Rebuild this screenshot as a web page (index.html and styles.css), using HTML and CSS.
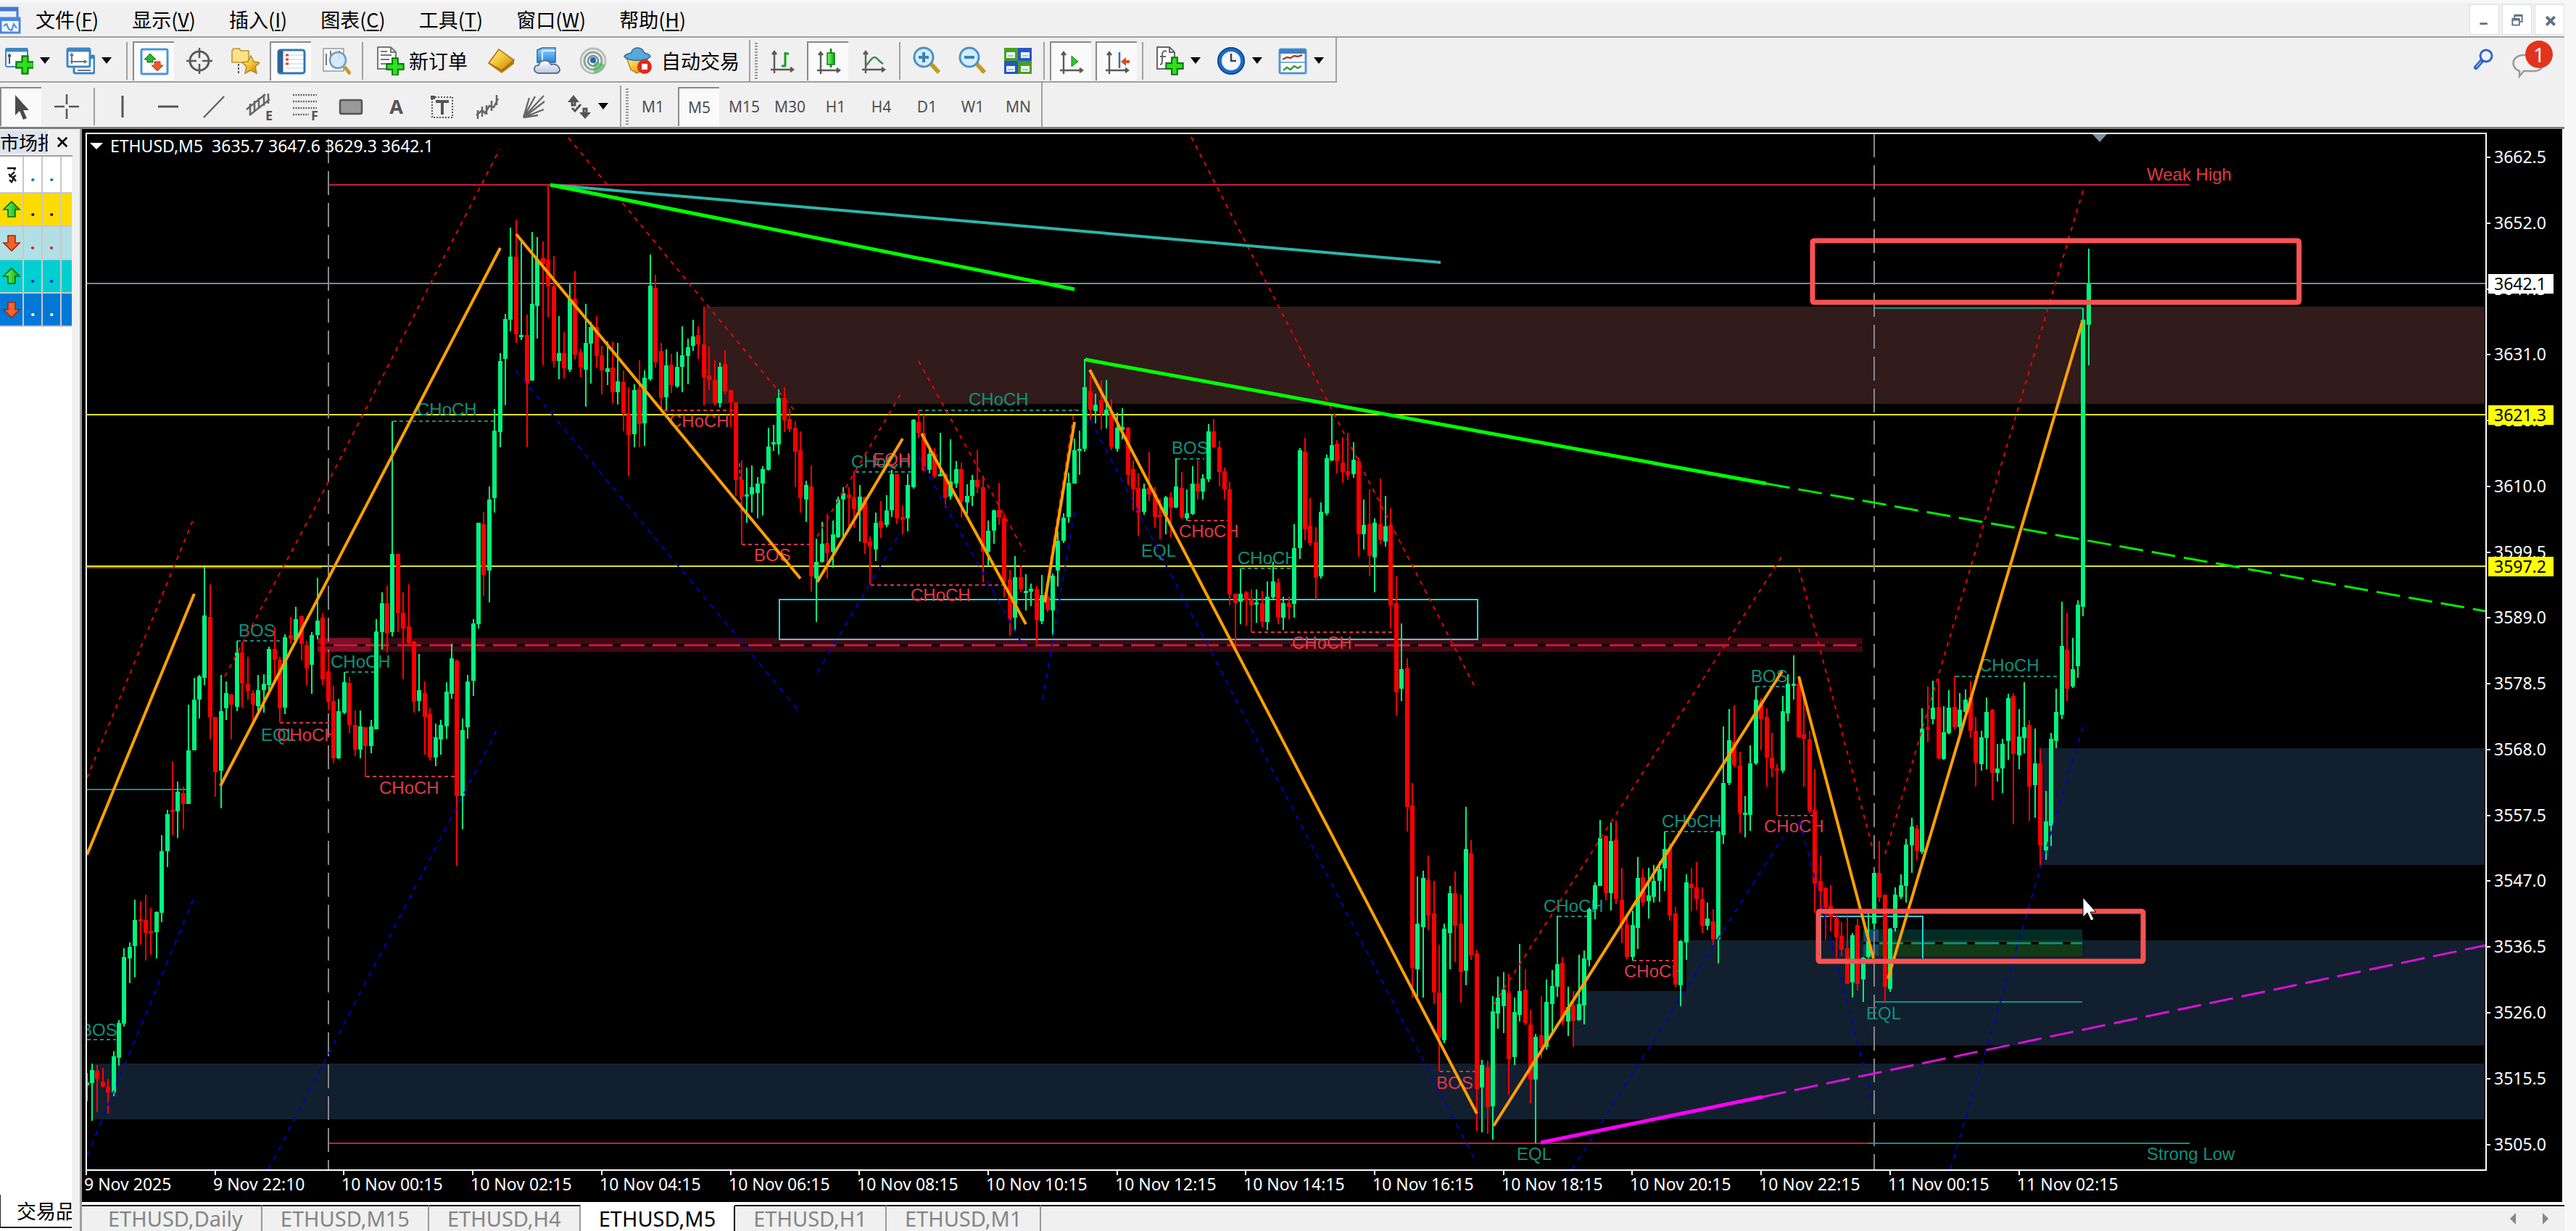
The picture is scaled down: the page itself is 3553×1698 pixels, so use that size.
FILE: index.html
```html
<!DOCTYPE html>
<html lang="zh-CN">
<head>
<meta charset="utf-8">
<meta name="viewport" content="width=device-width, initial-scale=1">
<title>ETHUSD,M5</title>
<link rel="stylesheet" href="styles.css">
</head>
<body>
<svg class="defs" aria-hidden="true">
  <defs>
    <linearGradient id="gold" x1="0" y1="0" x2="1" y2="1"><stop offset="0" stop-color="#fff0a0"/><stop offset=".5" stop-color="#f2c12e"/><stop offset="1" stop-color="#b87a10"/></linearGradient>
    <linearGradient id="sky" x1="0" y1="0" x2="0" y2="1"><stop offset="0" stop-color="#8fd3ff"/><stop offset="1" stop-color="#2a86d8"/></linearGradient>
    <linearGradient id="cloudfill" x1="0" y1="0" x2="0" y2="1"><stop offset="0" stop-color="#ffffff"/><stop offset="1" stop-color="#b9c8dd"/></linearGradient>
    <linearGradient id="leaf" x1="0" y1="0" x2="1" y2="0"><stop offset="0" stop-color="#7dff6a"/><stop offset="1" stop-color="#0aa50a"/></linearGradient>
    <symbol id="plus" viewBox="0 0 20 20"><path d="M7 1h6v6h6v6h-6v6H7v-6H1V7h6z" fill="#2fe01f" stroke="#087a0c" stroke-width="1.6"/></symbol>
    <symbol id="axes" viewBox="0 0 40 40"><path d="M9 7v30M4 32h31M6 11l3-4 3 4M31 29l4 3-4 3" fill="none" stroke="#5a5a5a" stroke-width="2.4"/></symbol>
    <symbol id="up" viewBox="0 0 26 26"><path d="M13 2l11 11h-6v10H8V13H2z" fill="url(#leaf)" stroke="#0a6a12" stroke-width="1.6"/></symbol>
    <symbol id="down" viewBox="0 0 26 26"><path d="M13 24L2 13h6V3h10v10h6z" fill="#f4622e" stroke="#9a2a0c" stroke-width="1.6"/></symbol>
  </defs>
</svg>

<header class="chrome">
  <nav class="menu">
    <svg class="app-icon" viewBox="0 0 30 40"><rect x="-8" y="4" width="32" height="22" fill="#e8f1fd" stroke="#3f78d6" stroke-width="3"/><path d="M-8 6h32" stroke="#3f78d6" stroke-width="5"/><rect x="1" y="18" width="26" height="20" fill="#f4f9ff" stroke="#4a86e0" stroke-width="3"/><path d="M1 20h26" stroke="#4a86e0" stroke-width="4"/><path d="M5 29l4-3 3 7 4 2 3-9 4 6" fill="none" stroke="#4a86e0" stroke-width="2"/></svg>
    <button class="menu-item">文件(<u>F</u>)</button>
    <button class="menu-item">显示(<u>V</u>)</button>
    <button class="menu-item">插入(<u>I</u>)</button>
    <button class="menu-item">图表(<u>C</u>)</button>
    <button class="menu-item">工具(<u>T</u>)</button>
    <button class="menu-item">窗口(<u>W</u>)</button>
    <button class="menu-item">帮助(<u>H</u>)</button>
    <div class="window-buttons">
      <button aria-label="最小化"><svg viewBox="0 0 41 41"><path d="M14 27h11" stroke="#5f7283" stroke-width="3"/></svg></button>
      <button aria-label="还原"><svg viewBox="0 0 41 41"><path d="M17 19v-4h11v9h-4M14 20h10v9H14z" fill="none" stroke="#5f7283" stroke-width="2"/><path d="M17 15h11M14 21h10" stroke="#5f7283" stroke-width="3"/></svg></button>
      <button aria-label="关闭"><svg viewBox="0 0 41 41"><path d="M16 17l12 12M28 17L16 29" stroke="#5f7283" stroke-width="4"/></svg></button>
    </div>
  </nav>

  <div class="bar-row">
    <div class="toolbar toolbar-main">
      <button class="tool wide" aria-label="新图表"><svg class="ico" viewBox="0 0 40 40"><rect x="2" y="3" width="30" height="25" rx="2" fill="#fff" stroke="#3d86c4" stroke-width="2"/><path d="M2 5h30" stroke="#3d86c4" stroke-width="5"/><path d="M7 24V12M5 14l2-3 2 3" fill="none" stroke="#456" stroke-width="2"/><use href="#plus" x="15" y="12" width="27" height="27"/></svg><span class="caret"></span></button>
      <button class="tool wide" aria-label="配置文件"><svg class="ico" viewBox="0 0 40 40"><rect x="11" y="13" width="28" height="24" rx="2" fill="#fff" stroke="#3d86c4" stroke-width="3"/><path d="M11 15h28" stroke="#3d86c4" stroke-width="4"/><rect x="2" y="3" width="31" height="25" rx="2" fill="#fff" stroke="#3d86c4" stroke-width="3"/><path d="M2 5h31" stroke="#3d86c4" stroke-width="5"/><path d="M8 24V11M6 13l2-3 2 3M6 21h21M25 19l3 2-3 2M16 33h18" fill="none" stroke="#678" stroke-width="2"/></svg><span class="caret"></span></button>
      <i class="sep"></i>
      <button class="tool on" aria-label="市场报价"><svg class="ico" viewBox="0 0 40 40"><rect x="2" y="3" width="36" height="34" rx="2" fill="#fff" stroke="#4a94dc" stroke-width="3"/><path d="M14 9l8 8h-4v4h-8v-4H6z" fill="#2bb32b" stroke="#137313"/><path d="M24 33l-8-8h4v-5h8v5h4z" fill="#f05a28" stroke="#b23a10"/></svg></button>
      <button class="tool" aria-label="数据窗口"><svg class="ico" viewBox="0 0 40 40"><g fill="none" stroke="#5a5a5a"><circle cx="20" cy="20" r="13" stroke-width="3"/><path d="M20 2v14M20 24v14M2 20h14M24 20h14" stroke-width="2.5"/></g></svg></button>
      <button class="tool" aria-label="导航"><svg class="ico" viewBox="0 0 40 40"><path d="M2 6l2-3h8l2 3h11v16H2z" fill="#fbe08a" stroke="#b8942c" stroke-width="1.5"/><path d="M11 24v13" stroke="#555" stroke-width="2" stroke-dasharray="3 2"/><path d="M28 13l4 8 9 1-7 6 2 9-8-4-8 4 2-9-6-6 8-1z" fill="url(#gold)" stroke="#b88a18" stroke-width="1.5"/></svg></button>
      <button class="tool on" aria-label="终端"><svg class="ico" viewBox="0 0 40 40"><rect x="2" y="4" width="36" height="32" rx="3" fill="#fff" stroke="#2f76b8" stroke-width="3"/><path d="M5 5v30" stroke="#2f5f94" stroke-width="7"/><path d="M13 11h23M13 17h23M13 23h23M13 29h23" stroke="#cfe0f4" stroke-width="1.5"/><path d="M12 11h4M12 17h4M12 23h4" stroke="#e23b2e" stroke-width="3"/></svg></button>
      <button class="tool" aria-label="策略测试"><svg class="ico" viewBox="0 0 40 40"><rect x="2" y="3" width="28" height="31" fill="#f8f8f8" stroke="#999" stroke-width="1.5"/><path d="M6 10v16M12 6v10M24 6v12" stroke="#777" stroke-width="2"/><path d="M31 28l8 10" stroke="#c9962c" stroke-width="5"/><circle cx="22" cy="19" r="11" fill="#cfe8fb" fill-opacity=".9" stroke="#6f9cc4" stroke-width="2.5"/></svg></button>
      <i class="sep"></i>
      <button class="tool labelled order"><svg class="ico" viewBox="0 0 40 40"><path d="M3 1h18l7 7v23H3z" fill="#fff" stroke="#777" stroke-width="2"/><path d="M21 1v7h7M7 12h15M7 18h12M7 24h8M7 7h9" fill="none" stroke="#777" stroke-width="2"/><use href="#plus" x="14" y="15" width="26" height="26"/></svg>新订单</button>
      <button class="tool" aria-label="MetaEditor"><svg class="ico" viewBox="0 0 40 40"><path d="M16 4l21 15v5L20 37 2 24z" fill="#b87a10"/><path d="M16 4l21 15-17 14L2 23z" fill="url(#gold)" stroke="#a66c0e" stroke-width="1.5"/></svg></button>
      <button class="tool" aria-label="云"><svg class="ico" viewBox="0 0 40 40"><path d="M6 5l7-3h18v20H6z" fill="url(#sky)" stroke="#1c6ab4" stroke-width="1.5"/><path d="M13 6h18M13 6v17" stroke="#d6f0ff" stroke-width="2"/><path d="M8 37c-8-1-8-11 0-11 1-8 14-9 17-1 9-3 17 9 8 12z" fill="url(#cloudfill)" stroke="#5b6f91" stroke-width="2"/></svg></button>
      <button class="tool" aria-label="信号"><svg class="ico" viewBox="0 0 40 40"><g fill="none"><circle cx="20" cy="20" r="17" stroke="#b5c0ba" stroke-width="3"/><circle cx="20" cy="20" r="12" stroke="#8ea79a" stroke-width="3"/><circle cx="20" cy="20" r="7" stroke="#6d8f9f" stroke-width="2.5"/></g><path d="M21 20v17c8-1 13-5 15-12z" fill="#47b04a" opacity=".6"/><circle cx="20" cy="19" r="4" fill="#2b62a8"/></svg></button>
      <button class="tool labelled auto"><svg class="ico" viewBox="0 0 40 40"><path d="M4 15h30l-6 18-10 4-8-5z" fill="url(#gold)" stroke="#b8861c" stroke-width="1.5"/><path d="M1 14c2-5 8-3 10-6 1-8 15-8 17 0 2 3 8 1 9 6-6 7-30 7-36 0z" fill="#58a8d8" stroke="#2c6c9c" stroke-width="1.5"/><circle cx="29" cy="28" r="10" fill="#e02a1c"/><rect x="25" y="24" width="8" height="8" fill="#fff"/></svg>自动交易</button>
      <i class="sep full"></i>
      <i class="grip"></i>
      <button class="tool" aria-label="柱状图"><svg class="ico" viewBox="0 0 40 40"><use href="#axes"/><path d="M24 8v20M24 10h5M19 27h5" stroke="#12a01c" stroke-width="3"/></svg></button>
      <button class="tool on" aria-label="蜡烛图"><svg class="ico" viewBox="0 0 40 40"><use href="#axes"/><path d="M23 2v26" stroke="#0b7a12" stroke-width="2.5"/><rect x="18" y="8" width="10" height="16" fill="url(#leaf)" stroke="#0b7a12" stroke-width="1.5"/></svg></button>
      <button class="tool" aria-label="折线图"><svg class="ico" viewBox="0 0 40 40"><use href="#axes"/><path d="M9 27c5-5 8-12 12-12s6 6 12 9" fill="none" stroke="#3c8c46" stroke-width="2.5"/></svg></button>
      <i class="sep"></i>
      <button class="tool" aria-label="放大"><svg class="ico" viewBox="0 0 40 40"><path d="M25 23l12 13" stroke="#c49a24" stroke-width="6"/><circle cx="16" cy="15" r="13" fill="#d4edfb" stroke="#4f8fc8" stroke-width="3"/><path d="M9 15h14M16 8v14" stroke="#3f7fb8" stroke-width="4"/></svg></button>
      <button class="tool" aria-label="缩小"><svg class="ico" viewBox="0 0 40 40"><path d="M25 23l12 13" stroke="#c49a24" stroke-width="6"/><circle cx="16" cy="15" r="13" fill="#d4edfb" stroke="#4f8fc8" stroke-width="3"/><path d="M9 15h14" stroke="#3f7fb8" stroke-width="4"/></svg></button>
      <button class="tool" aria-label="平铺"><svg class="ico" viewBox="0 0 40 40"><path d="M1 2h19v18H1zM20 20h19v18H20z" fill="#4a9e1e"/><path d="M20 2h19v18H20zM1 20h19v18H1z" fill="#2456c8"/><path d="M4 8h12v8H4zM24 8h12v8H24zM4 27h12v8H4zM24 27h12v8H24z" fill="#eef6ff"/><path d="M6 13h8M26 13h8M6 32h8M26 32h8" stroke="#9ab" stroke-width="1.5"/></svg></button>
      <i class="sep"></i>
      <button class="tool on" aria-label="自动滚动"><svg class="ico" viewBox="0 0 40 40"><use href="#axes"/><path d="M20 12v15l9-7z" fill="#35c435" stroke="#0e8a18"/></svg></button>
      <button class="tool on" aria-label="图表平移"><svg class="ico" viewBox="0 0 40 40"><use href="#axes"/><path d="M23 7v22" stroke="#2f6fae" stroke-width="2.5"/><path d="M25 20l7-6v4h5v4h-5v4z" fill="#d8501c"/></svg></button>
      <i class="sep"></i>
      <button class="tool wide" aria-label="指标"><svg class="ico" viewBox="0 0 40 40"><path d="M3 1h17l7 7v23H3z" fill="#fff" stroke="#666" stroke-width="2"/><path d="M20 1v7h7M16 7c-4-2-6 1-6 5v8c0 4-1 5-3 5M7 14h8" fill="none" stroke="#666" stroke-width="2"/><use href="#plus" x="14" y="14" width="26" height="26"/></svg><span class="caret"></span></button>
      <button class="tool wide" aria-label="时间周期"><svg class="ico" viewBox="0 0 40 40"><circle cx="20" cy="20" r="16" fill="#f4f8fc" stroke="#1e6cc8" stroke-width="6"/><circle cx="20" cy="20" r="18" fill="none" stroke="#0e3f88" stroke-width="1.5"/><path d="M20 10v10h7" fill="none" stroke="#444" stroke-width="2.5"/></svg><span class="caret"></span></button>
      <button class="tool wide" aria-label="模板"><svg class="ico" viewBox="0 0 40 40"><rect x="2" y="4" width="36" height="33" rx="2" fill="#fff" stroke="#5596cf" stroke-width="3"/><path d="M2 7h36" stroke="#3f80bd" stroke-width="6"/><path d="M2 22h36" stroke="#5596cf" stroke-width="1.5"/><path d="M6 18l6-3 5 1 5-3 5 1 6-2" fill="none" stroke="#b5382a" stroke-width="2.5"/><path d="M7 33l5-4 5 3 5-5 5 3 5-3" fill="none" stroke="#3a9a3a" stroke-width="2.5"/></svg><span class="caret"></span></button>
    </div>
    <div class="alerts">
      <button aria-label="搜索"><svg viewBox="0 0 40 40"><path d="M10 30l8-9" stroke="#2f5fb8" stroke-width="6" stroke-linecap="round"/><path d="M10 30l7-8" stroke="#7da4e6" stroke-width="2"/><circle cx="24" cy="14" r="8" fill="#eef2fa" stroke="#3567c4" stroke-width="3"/></svg></button>
      <button class="chat" aria-label="消息"><svg viewBox="0 0 60 54"><path d="M12 42C-2 36 2 20 18 20h18c14 4 12 20-2 22H18l-6 7z" fill="#f1f1f1" stroke="#9a9a9a" stroke-width="2.5"/></svg><span class="badge">1</span></button>
    </div>
  </div>

  <div class="bar-row">
    <div class="toolbar toolbar-draw">
      <button class="tool on" aria-label="光标"><svg class="ico" viewBox="0 0 40 40"><path d="M11 3v28l6-6 5 12 5-2-5-11h8z" fill="#4a4a4a"/></svg></button>
      <button class="tool" aria-label="十字准线"><svg class="ico" viewBox="0 0 40 40"><path d="M20 3v14M20 23v14M3 20h14M23 20h14" stroke="#555" stroke-width="2.5"/></svg></button>
      <i class="sep"></i>
      <button class="tool" aria-label="垂直线"><svg class="ico" viewBox="0 0 40 40"><path d="M20 5v30" stroke="#555" stroke-width="3"/></svg></button>
      <button class="tool" aria-label="水平线"><svg class="ico" viewBox="0 0 40 40"><path d="M6 20h28" stroke="#555" stroke-width="3"/></svg></button>
      <button class="tool" aria-label="趋势线"><svg class="ico" viewBox="0 0 40 40"><path d="M6 35L34 6" stroke="#666" stroke-width="2.5"/></svg></button>
      <button class="tool" aria-label="等距通道"><svg class="ico" viewBox="0 0 40 40"><path d="M2 24L28 3M6 32L34 10M7 16v16M13 12v14M19 8v15M26 3v16M32 2v14" stroke="#666" stroke-width="2.5"/><text x="28" y="39" class="glyph">E</text></svg></button>
      <button class="tool" aria-label="斐波那契"><svg class="ico" viewBox="0 0 40 40"><path d="M3 4h33M3 13h33M3 22h33M3 31h22" stroke="#666" stroke-width="2.5" stroke-dasharray="2 1.5"/><text x="28" y="39" class="glyph">F</text></svg></button>
      <button class="tool" aria-label="矩形"><svg class="ico" viewBox="0 0 40 40"><rect x="5" y="11" width="30" height="19" rx="2" fill="#999" stroke="#555" stroke-width="2.5"/></svg></button>
      <button class="tool letter">A</button>
      <button class="tool" aria-label="文本标签"><svg class="ico" viewBox="0 0 40 40"><rect x="6" y="7" width="28" height="28" fill="none" stroke="#555" stroke-width="2" stroke-dasharray="2 2"/><path d="M11 13h18M20 13v18" stroke="#555" stroke-width="4"/><path d="M4 5h6v5H4z" fill="#555"/></svg></button>
      <button class="tool" aria-label="艾略特波浪"><svg class="ico" viewBox="0 0 40 40"><path d="M6 25v12M12 20v14M18 18v13M25 12v14M32 4v14M4 32l8-7 4 4 6-10 6 2 6-12" fill="none" stroke="#666" stroke-width="2.5"/></svg></button>
      <button class="tool" aria-label="江恩扇形"><svg class="ico" viewBox="0 0 40 40"><path d="M6 35L14 8M6 35L22 6M6 35L34 5M6 35l29-22M6 35l28-11M6 35l20-3" stroke="#666" stroke-width="2.3"/></svg></button>
      <button class="tool wide" aria-label="箭头"><svg class="ico" viewBox="0 0 40 40"><path d="M12 4l8 10H4zM28 37l-8-9h16z" fill="#555"/><path d="M10 13h4v5h-4zM26 23h4v6h-4zM10 22l4 4 8-9" fill="none" stroke="#555" stroke-width="3"/></svg><span class="caret"></span></button>
      <i class="sep full"></i>
      <i class="grip"></i>
      <button class="tool period">M1</button>
      <button class="tool period on">M5</button>
      <button class="tool period">M15</button>
      <button class="tool period">M30</button>
      <button class="tool period">H1</button>
      <button class="tool period">H4</button>
      <button class="tool period">D1</button>
      <button class="tool period">W1</button>
      <button class="tool period">MN</button>
    </div>
  </div>
</header>

<main class="workspace">
  <aside class="market">
    <div class="market-head"><h2>市场报价</h2><button aria-label="关闭"><svg viewBox="0 0 18 18"><path d="M2 2l14 14M16 2L2 16" stroke="#000" stroke-width="3"/></svg></button></div>
    <div class="market-body">
      <table class="quotes">
        <tr><th><svg class="sym" viewBox="0 0 26 26"><path d="M7 4h12M17 4v3M17 9l-7 7M9 12l5 5 5-3M10 20l3 3 3-5 3 4" fill="none" stroke="#111" stroke-width="2.4"/></svg></th><th>.</th><th>.</th><th></th></tr>
        <tr class="q1"><td><svg class="sym"><use href="#up"/></svg></td><td>.</td><td>.</td><td></td></tr>
        <tr class="q2"><td><svg class="sym"><use href="#down"/></svg></td><td>.</td><td>.</td><td></td></tr>
        <tr class="q3"><td><svg class="sym"><use href="#up"/></svg></td><td>.</td><td>.</td><td></td></tr>
        <tr class="q4"><td><svg class="sym"><use href="#down"/></svg></td><td>.</td><td>.</td><td></td></tr>
      </table>
      <button class="market-tab">交易品种</button>
    </div>
  </aside>

  <section class="charts">
    <svg class="chart" viewBox="113 179 3421 1480" role="img" aria-label="ETHUSD,M5">
      <defs><clipPath id="plot"><rect x="120" y="186" width="3308" height="1428"/></clipPath></defs>
      <rect class="screen" x="113" y="178" width="3421" height="1481"/>
      <g clip-path="url(#plot)">
        <rect class="supply" x="971" y="424" width="2456" height="134"/>
        <rect class="demand" x="130" y="1468" width="3297" height="77"/>
        <path class="demand" d="M2170 1368H2326V1298H3427V1443H2170z"/>
        <rect class="demand" x="2815" y="1033" width="612" height="161"/>
        <rect x="438" y="881" width="2131" height="19" fill="#400813"/>
        <rect x="438" y="881" width="73" height="19" fill="#820c26"/>
        <path d="M438 891H2569" stroke="#000" stroke-width="3"/>
        <path class="crimson dash" d="M460 891H2569"/>
        <rect x="2570" y="1283" width="302" height="15" fill="#022b27"/>
        <rect x="2570" y="1298" width="302" height="22" fill="#123a14"/>
        <rect x="2570" y="1283" width="21" height="37" fill="#10486f"/>
        <path d="M2570 1302H2872" stroke="#000" stroke-width="3"/>
        <path class="teal dash" d="M2592 1302H2872"/>

        <path class="level" d="M120 573H3428M120 782H3428"/>
        <path d="M120 784H444" stroke="#ff9a30" stroke-width="1"/>
        <path class="bid" d="M120 392H3428"/>
        <path class="crimson" d="M453 256H3020M453 1578H2577"/>
        <path class="teal" d="M2577 1578H3020M120 1090H257M2585 1383H2872M2585 426H2873"/>
        <path class="divider" d="M453 193V1614M2585 185V1614"/>
        <path class="aqua" d="M1075 828H2038V883H1075zM2511 1323V1265H2652V1323"/>

        <path class="mark teal" d="M327 885H388M476 928H521M120 1435H160M542 582H683M1180 652H1260M1267 567H1497M1623 634H1661M1712 785H1785M2149 1265H2191M2296 1148H2372M2422 948H2462M2697 934H2841"/>
        <path class="mark rose" d="M386 998H460M505 1072H630M916 567H1013M1020 640L1023 723M1023 752H1119M1201 808H1386M1638 719H1696M1726 873H1920M1986 1479H2035M2252 1326H2308M2452 1126H2502"/>

        <g class="tag teal-text">
          <text x="111" y="1430">BOS</text><text x="329" y="879">BOS</text><text x="360" y="1023">EQL</text>
          <text x="456" y="922">CHoCH</text><text x="575" y="574">CHoCH</text><text x="1174" y="646">CHoCH</text>
          <text x="1336" y="560">CHoCH</text><text x="1616" y="627">BOS</text><text x="1574" y="769">EQL</text>
          <text x="1707" y="779">CHoCH</text><text x="2129" y="1259">CHoCH</text><text x="2092" y="1601">EQL</text>
          <text x="2292" y="1142">CHoCH</text><text x="2574" y="1407">EQL</text><text x="2415" y="942">BOS</text>
          <text x="2730" y="927">CHoCH</text><text x="2961" y="1601">Strong Low</text>
        </g>
        <g class="tag rose-text">
          <text x="382" y="1023">CHoCH</text><text x="523" y="1096">CHoCH</text><text x="923" y="590">CHoCH</text>
          <text x="1040" y="775">BOS</text><text x="1204" y="643">EQH</text><text x="1256" y="830">CHoCH</text>
          <text x="1626" y="742">CHoCH</text><text x="1782" y="896">CHoCH</text><text x="1981" y="1503">BOS</text>
          <text x="2240" y="1349">CHoCH</text><text x="2433" y="1149">CHoCH</text><text x="2961" y="250">Weak High</text>
        </g>

        <g id="candles"></g>

        <path class="band-low" d="M120 1595L268 1238M370 1614L689 1001M711 512L1104 984M1127 929L1242 735M1267 631L1414 897M1438 966L1482 707M1504 580L2036 1604M2168 1614L2459 1155M2482 1132L2584 1524M2690 1614L2874 999"/>
        <path class="band-high" d="M120 1074L268 714M310 934L435 700L689 207M784 191L1099 571M1127 741L1243 543M1267 499L1413 762M1441 824L1482 565M1643 190L2036 952M2060 1387L2458 768M2481 785L2584 1176M2600 1179L2873 264"/>
        <path class="zigzag" d="M120 1180L268 820M304 1085L690 343M712 324L1104 799M1127 804L1245 606M1271 599L1415 862M1441 832L1482 583M1503 511L2037 1537M2060 1554L2458 927M2481 934L2584 1323M2604 1351L2872 445"/>
        <path d="M759 256L1987 363" stroke="#2cb5a8" stroke-width="4"/>
        <path d="M759 256L1482 400M1497 497L2436 668" stroke="#0f0" stroke-width="5" fill="none"/>
        <path class="thin-dash" d="M2436 668L3428 844" stroke="#0e0"/>
        <path d="M2125 1577L2431 1514" stroke="#ff00ff" stroke-width="5"/>
        <path class="thin-dash" d="M2431 1514L3428 1305" stroke="#d911d9"/>
        <path d="M2886 186h20l-10 11z" fill="#8090a0"/>
        <path d="M124 198h18l-9 9z" fill="#fff"/>
      </g>
      <path class="frame" d="M119 1615V185H3429V1615z"/>
      <g class="annotation"><rect x="2500" y="333" width="671" height="85" rx="2"/><rect x="2508" y="1258" width="448" height="69" rx="2"/></g>
      <path d="M2873 1239v27l6-6 5 11 4-2-5-10h8z" fill="#fff" stroke="#000"/>
      <text class="axis" x="152" y="211" xml:space="preserve">ETHUSD,M5  3635.7 3647.6 3629.3 3642.1</text>
      <g class="axis" id="axes-labels"></g>
      <rect x="3432" y="379" width="90" height="27" fill="#fff"/><text class="axis dark" x="3440" y="401">3642.1</text>
      <rect x="3432" y="560" width="90" height="27" fill="#ff0"/><text class="axis dark" x="3440" y="582">3621.3</text>
      <rect x="3432" y="769" width="90" height="27" fill="#ff0"/><text class="axis dark" x="3440" y="791">3597.2</text>
    </svg>
    <nav class="tabs">
      <a href="#daily">ETHUSD,Daily</a>
      <a href="#m15">ETHUSD,M15</a>
      <a href="#h4">ETHUSD,H4</a>
      <a href="#m5" class="current">ETHUSD,M5</a>
      <a href="#h1">ETHUSD,H1</a>
      <a href="#m1">ETHUSD,M1</a>
      <span class="tab-scroll"><button aria-label="向左"><svg viewBox="0 0 8 16"><path d="M8 0v16L0 8z"/></svg></button><button aria-label="向右"><svg viewBox="0 0 8 16"><path d="M0 0v16l8-8z"/></svg></button></span>
    </nav>
  </section>
</main>
<script src="chart.js"></script>
</body>
</html>
```
FILE: chart.js
```js
// Each batch holds consecutive M5 bars: direction, high, low, body top, body bottom.
// Values are counted down from `top`, with `unit` of them to one chart unit.
const STEP = 7.403;
const FIRST_X = 119.5;
const batches = [
  { first: 0, top: 700, unit: 1.7422, bars: `g1360,1428,1383,1390 g1338,1476,1354,1385 r1341,1455,1355,1376 r1348,1396,1382,1393 r1374,1459,1393,1408 g1309,1417,1321,1408 g1234,1344,1241,1324 g1061,1250,1082,1242 g1047,1144,1057,1085 g944,1131,993,1056 r948,1053,991,996 r932,1090,993,1024 r963,1076,1019,1023 g973,1085,974,1023 g789,998,828,976 g728,866,738,828 r612,790,729,734 g660,796,685,731 r673,776,689,714 g476,715,585,714 g412,586,463,585 g405,508,408,463 g144,428,261,411 r186,560,264,505 r505,697,506,637 g405,724,492,634 g419,512,448,485 r449,560,451,476 g322,492,351,480 r325,482,351,425 r361,463,425,443 r441,515,448,476 g405,497,441,479 g402,495,425,441 g336,446,341,429 r290,416,341,367 r361,520,367,485 g307,498,313,483 r264,330,309,317 g241,328,270,321 r261,369,263,330 r322,430,332,389 g302,450,308,379 g170,319,274,308 r254,429,267,414 r348,490,396,469 r431,616,467,605 g462,606,492,605 g397,498,422,495 r409,544,424,524 r489,599,524,583 g489,605,528,583 r530,649,530,575 g513,593,528,575 g270,535,300,534 g206,344,232,302 r190,350,232,305 g-205,311,113,302 r113,301,113,256 r205,414,254,293 r186,330,287,328 r322,495,324,469 g354,491,441,467 r419,596,448,506 r485,609,499,603 g521,624,554,602 g512,596,524,559 g422,558,444,528 g330,462,364,450 r368,862,370,695 g509,776,536,695 g405,557,419,530 g270,454,280,418 g38,292,38,282 r12,215,41,163` },
  { first: 75, top: 180, unit: 2.0632, bars: `g1015,1346,1052,1254 g795,1090,857,1048 g636,904,659,860 g525,784,538,652 g279,574,361,541 r256,606,361,582 g315,598,583,587 r527,903,583,723 g290,713,495,713 g305,594,370,501 r318,671,365,381 r158,535,369,445 r359,677,446,659 g530,710,635,658 r576,708,635,679 g440,690,482,682 r403,654,480,640 r623,703,633,676 g495,789,606,682 g546,723,561,609 r530,676,561,643 r615,754,642,685 g602,727,678,689 r602,777,676,747 g606,781,716,746 r685,858,717,806 r732,987,806,869 g725,904,740,866 r656,903,737,838 g686,900,706,835 g354,713,443,709 r412,676,450,663 r606,800,629,764 g625,796,671,762 r637,748,668,727 g632,735,675,731 g560,747,641,675 g594,724,618,643 g541,630,587,615 r560,651,583,610 r503,784,611,706 r617,740,699,711 r656,784,712,778 g662,791,675,778 r628,754,667,744 r740,846,740,775 r775,1041,775,996 r941,1181,996,1045 g961,1118,1037,1042 g956,1090,1018,1038 g989,1106,1006,1034 g957,1098,965,1006 g847,970,901,968 g839,915,890,894 g738,925,763,896 r732,861,763,827 r795,861,823,852 r829,1018,848,917 r858,1090,912,1048 g999,1117,1011,1052 r956,1315,1015,1271 g1163,1400,1229,1278 g1117,1231,1179,1230 r1094,1278,1176,1204 g1112,1246,1152,1201 g1043,1161,1052,1160 g1018,1165,1034,1053 r1018,1135,1037,1049 r972,1132,1046,1079 g1010,1171,1045,1084 r1045,1208,1046,1175 r1158,1295,1172,1186 g1090,1228,1119,1194 r1057,1161,1114,1132 g1040,1130,1083,1125 g968,1101,981,1084 r981,1123,981,1106 r1068,1151,1102,1110 g981,1143,1011,1106 g823,1022,826,1018 r798,877,831,862 r810,972,862,969 g911,978,923,967 r906,991,922,987 g863,987,981,985 r978,1074,980,1048 g880,1052,1001,1043 g943,1019,965,1006 r947,1103,965,1059 g1008,1094,1041,1060 g982,1070,996,1041 r912,1034,996,1018 r984,1287,1018,1200 g1112,1243,1141,1200 g1082,1179,1083,1141 r1005,1124,1081,1103 r1094,1330,1103,1287 r1252,1441,1279,1392 g1214,1429,1272,1388 r1240,1317,1273,1308 g1264,1368,1312,1319 g1291,1355,1306,1315 r1297,1460,1305,1395 g1266,1407,1325,1398 r1323,1372,1329,1365 g1262,1438,1268,1368 g1143,1300,1169,1254 g1092,1176,1103,1170 g975,1119,1004,1101 g878,1007,912,1006 g857,983,907,914` },
  { first: 186, top: 420, unit: 2.8, bars: `g213,571,322,560 r280,448,336,409 g347,462,388,413 r297,487,372,426 g295,482,409,429 r370,566,417,554 g421,571,479,560 g404,524,477,486 r477,700,479,660 r605,798,638,716 r654,896,710,807 g694,814,714,804 r571,762,712,736 r709,865,734,823 r752,910,816,823 g742,890,748,818 r728,902,747,787 g596,790,705,787 r649,832,710,823 g716,837,809,830 g627,815,695,812 r605,756,694,726 g658,756,675,725 g466,688,493,678 r446,558,493,554 r529,705,555,649 r632,756,648,717 r688,1165,716,1124 r1120,1330,1120,1156 g1022,1238,1120,1151 r1110,1243,1115,1144 r1104,1268,1142,1166 g1104,1233,1153,1160 r1110,1248,1156,1228 g1073,1259,1131,1228 g997,1143,1073,1134 r1062,1238,1078,1213 g1131,1259,1157,1212 r1131,1218,1157,1170 g850,1213,943,1160 g556,986,565,943 r518,913,571,870 r750,935,856,923 r862,1141,922,1057 g767,1062,804,1053 g583,818,597,808 g426,607,545,606 r525,655,540,607 r515,692,612,649 r499,680,647,664 g535,673,601,659 r593,978,608,890 g756,948,855,891 r716,1053,851,974 g830,1114,846,980 r675,929,850,913 g742,938,860,917 r789,1255,855,1166 r1053,1590,1156,1502 g1234,1533,1410,1488 r1368,2037,1406,1943` },
  { first: 247, top: 1050, unit: 2.6133, bars: `r80,854,163,747 g419,851,589,753 g396,855,424,602 r342,612,430,560 r434,877,551,836 r665,1122,835,1000 g588,1020,606,1008 g453,753,478,622 r401,727,478,597 r484,873,589,762 g168,811,318,757 r288,718,335,704 r681,1336,695,1183 g1078,1341,1097,1178 r1083,1347,1105,1250 g850,1366,904,1246 g780,968,855,912 g763,983,826,887 r769,1205,835,1077 g855,1097,908,1070 g661,940,830,916 r752,954,827,947 r900,1235,951,1151 g986,1380,995,1150 r850,1075,990,1037 g788,1042,870,1033 g755,983,813,877 g560,853,734,816 r707,953,730,940 g816,994,888,940 r830,1032,884,939 g700,937,879,936 g685,950,714,882 g530,741,536,718 g440,573,449,536 g215,453,280,452 r270,504,273,477 g226,540,289,477 r216,518,284,500 r388,659,502,591 r565,717,590,709 g540,722,594,709 g347,679,424,603 r390,524,422,512 g386,569,487,507 g376,511,434,492 g362,509,391,433 g257,471,318,389 r299,578,314,558 r527,818,551,808 g647,887,651,809 g409,718,438,656 r387,544,443,459 r366,538,457,499 r458,621,498,596 g511,612,570,597 r537,674,579,646 g255,733,255,645` },
  { first: 305, top: 780, unit: 2.3758, bars: `g530,915,714,886 g473,722,574,714 r460,664,579,656 r614,878,657,816 g758,894,812,820 g592,871,650,820 g400,656,442,651 r437,608,447,507 r470,727,500,631 r552,696,631,667 r654,822,667,675 g429,682,481,675 g358,512,390,486 g297,441,389,394 r374,569,390,566 r434,727,555,570 r545,815,573,807 r670,1140,803,1045 r953,1150,1036,1070 r1058,1230,1060,1124 r1049,1202,1116,1155 r1148,1290,1156,1220 r1172,1283,1216,1262 r1152,1373,1256,1373 g1208,1418,1213,1369 r1160,1395,1180,1374 g1285,1432,1287,1360 g1142,1290,1234,1286 g1010,1195,1010,1175 r905,1105,1010,1090 r1080,1433,1081,1383 g1190,1400,1193,1390 g1058,1202,1080,1190 g1014,1096,1050,1087 g899,1106,916,1053 g829,1010,857,920 r852,969,864,939 g470,948,536,940 r398,582,531,538 g380,522,469,507 r372,636,465,634 g464,640,548,636 g411,556,469,552 r364,539,465,531 g421,562,474,531 g408,492,442,483 r380,569,434,545 r500,727,544,649 g544,675,565,653 g434,670,482,569 r473,771,476,683 g587,710,667,683 g570,749,587,667 g424,640,437,577 r421,851,429,621 g473,670,562,626 g385,618,531,569 r508,838,526,726 g538,828,650,723 r601,987,650,920 g741,966,842,935 g552,921,570,856 g406,600,482,578 g121,507,267,491 r157,447,279,407 g240,403,342,399 g116,371,130,332 g-842,169,-802,137 g-1035,-654,-919,-786` }
];

const SVG = 'http://www.w3.org/2000/svg';
function add(parent, name, attrs, text) {
  const el = document.createElementNS(SVG, name);
  for (const key in attrs) el.setAttribute(key, attrs[key]);
  if (text) el.textContent = text;
  parent.appendChild(el);
}

const paths = { g: ['', ''], r: ['', ''] };
for (const { first, top, unit, bars } of batches) {
  bars.split(' ').forEach((bar, k) => {
    const [high, low, open, close] = bar.slice(1).split(',').map(v => Math.round(top + v / unit));
    const x = Math.round(FIRST_X + (first + k) * STEP);
    paths[bar[0]][0] += `M${x} ${high}V${low}`;
    paths[bar[0]][1] += `M${x} ${open}V${Math.max(close, open + 3)}`;
  });
}
const candles = document.getElementById('candles');
for (const side of ['g', 'r']) {
  add(candles, 'path', { class: 'wick ' + side, d: paths[side][0] });
  add(candles, 'path', { class: 'body ' + side, d: paths[side][1] });
}

const labels = document.getElementById('axes-labels');
for (let k = 0; k < 16; k++) {
  const y = Math.round(218 + k * 90.77);
  add(labels, 'path', { class: 'tick', d: `M3429 ${y}h6` });
  add(labels, 'text', { x: 3440, y: y + 8 }, (3662.5 - k * 10.5).toFixed(1));
}
const times = ['9 Nov 2025', '9 Nov 22:10', '10 Nov 00:15', '10 Nov 02:15', '10 Nov 04:15', '10 Nov 06:15', '10 Nov 08:15', '10 Nov 10:15', '10 Nov 12:15', '10 Nov 14:15', '10 Nov 16:15', '10 Nov 18:15', '10 Nov 20:15', '10 Nov 22:15', '11 Nov 00:15', '11 Nov 02:15'];
times.forEach((time, k) => {
  const x = Math.round(119 + k * 177.7);
  add(labels, 'path', { class: 'tick', d: `M${x} 1615v7` });
  add(labels, 'text', { x: x - 3, y: 1643 }, time);
});
```
FILE: styles.css
```css
* { box-sizing: border-box; }
body {
  margin: 0;
  height: 100vh;
  overflow: hidden;
  display: flex;
  flex-direction: column;
  padding-top: 4px;
  background: #f7f7f7;
  color: #000;
  font-family: "Noto Sans", "Noto Sans CJK SC", sans-serif;
}
button { border: 0; padding: 0; margin: 0; background: none; color: inherit; font: inherit; }
.defs { position: absolute; width: 0; height: 0; }

.chrome { flex: none; background: #f0f0f0; margin-right: 16px; border-bottom: 3px solid #808080; }
.menu { display: flex; align-items: center; height: 48px; border-bottom: 2px solid #a0a0a0; }
.app-icon { width: 30px; height: 40px; margin-right: 19px; }
.menu-item { margin-right: 46px; font: 27px/40px "Noto Sans CJK SC", sans-serif; white-space: nowrap; }
.menu-item u { text-underline-offset: 3px; }
.window-buttons { display: flex; gap: 4px; margin-left: auto; }
.window-buttons button { width: 41px; height: 42px; background: #fff; border: 1px solid #dcdcdc; }

.bar-row { display: flex; justify-content: space-between; }
.toolbar { display: flex; align-items: center; height: 62px; padding-top: 3px; border: solid #a0a0a0; border-width: 0 2px 2px 0; }
.toolbar-draw { height: 61px; margin-left: -3px; padding-top: 4px; border-bottom: 0; }
.tool { display: flex; align-items: center; justify-content: center; width: 57px; height: 54px; margin: 0 3px; }
.tool.on { background: #fafafa; border: solid #8a8a8a; border-width: 2px 0 0 2px; }
.ico { width: 40px; height: 40px; flex: none; }
.wide { width: 85px; margin: 0; padding-left: 6px; justify-content: flex-start; }
.sep + .wide { margin-left: 6px; }
.caret { margin-left: 9px; border: 7px solid transparent; border-top: 9px solid #000; border-bottom: 0; }
.labelled { justify-content: flex-start; font: 27px/40px "Noto Sans CJK SC", sans-serif; white-space: nowrap; }
.order { width: 149px; padding-left: 10px; gap: 6px; }
.auto { width: 174px; padding-left: 8px; gap: 12px; }
.sep { flex: none; width: 2px; height: 52px; margin: 0 4px; background: #a0a0a0; }
.sep.full { height: 58px; }
.grip { width: 4px; height: 50px; margin: 0 2px; background: repeating-linear-gradient(#999 0 2px, transparent 2px 4px); }
.toolbar-draw .sep { margin: 0 6px; }
.toolbar-draw .sep.full { margin: 0 4px 0 3px; }
.toolbar-draw .wide { padding-left: 12px; }
.toolbar-draw .caret { margin-left: 6px; }
.glyph { font: bold 18px "Noto Sans", sans-serif; fill: #555; }
.letter { color: #555; font-size: 27px; font-weight: 700; }
.period { color: #505050; font-size: 21px; }
.alerts { display: flex; align-items: flex-start; gap: 18px; padding: 4px 14px 0 0; }
.alerts button { position: relative; width: 40px; height: 52px; padding-top: 6px; }
.alerts .chat { width: 60px; padding: 0; }
.badge {
  position: absolute; top: 0; left: 20px;
  width: 38px; height: 38px; border-radius: 50%;
  background: #e2341d; color: #fff; font-size: 28px; line-height: 38px;
}

.workspace { display: flex; align-items: stretch; flex: 1; min-height: 0; }
.market { display: flex; flex-direction: column; flex: none; width: 113px; background: #f0f0f0; border-right: 3px solid #a0a0a0; }
.market-head { display: flex; align-items: center; flex: none; height: 38px; border-bottom: 2px solid #a0a0a0; margin-right: 10px; }
.market-head h2 { flex: none; width: 66px; margin: 0 12px 0 0; overflow: hidden; white-space: nowrap; background: #dbe4ee; font: 26px/32px "Noto Sans CJK SC", sans-serif; }
.market-head button { display: flex; width: 16px; height: 16px; }
.market-body { display: flex; flex-direction: column; flex: 1; width: 99px; background: #fff; overflow: hidden; }
.quotes { width: 99px; border-collapse: collapse; table-layout: fixed; }
.quotes th, .quotes td { width: 26px; height: 46px; padding: 0; border: solid #c8c8c8; border-width: 0 2px 2px 0; text-align: center; font-size: 24px; font-weight: 700; line-height: 40px; }
.quotes th { color: #0f7ac0; height: 50px; }
.quotes :is(th, td):first-child { width: 32px; }
.quotes :is(th, td):last-child { width: 15px; border-right: 0; }
.sym { display: block; width: 26px; height: 26px; margin: auto; }
.q1 { background: #ffdb00; color: #20108a; }
.q2 { background: #b0e0e6; color: #e02020; }
.q3 { background: #00ced1; color: #0020d8; }
.q4 { background: #0078d7; color: #fff; }
.market-tab { margin-top: auto; margin-bottom: 4px; height: 46px; padding-left: 22px; border: solid #222; border-width: 0 0 2px 1px; text-align: left; white-space: nowrap; font: 27px/36px "Noto Sans CJK SC", sans-serif; }

.charts { display: flex; flex-direction: column; flex: 1; min-width: 0; margin-right: 16px; background: #fff; }
.chart { display: block; width: 100%; height: auto; padding-right: 3px; flex: none; }
.screen { fill: #000; }
.supply { fill: #321b1b; }
.demand { fill: #121f2f; }
.crimson { stroke: #c81e3c; stroke-width: 2; fill: none; }
.teal { stroke: #149080; stroke-width: 2; fill: none; }
.dash { stroke-width: 3; stroke-dasharray: 33 11; }
.rose { stroke: #dc3246; stroke-width: 2; fill: none; }
.mark { stroke-dasharray: 5 4; }
.level { stroke: #e6e61e; stroke-width: 2; }
.bid { stroke: #778899; stroke-width: 2; }
.divider { stroke: #888; stroke-width: 2; stroke-dasharray: 33 11; }
.aqua { stroke: #26d4dc; stroke-width: 2; fill: none; }
.wick { stroke-width: 2; }
.body { stroke-width: 6; }
.g { stroke: #00f57f; }
.r { stroke: #ff0000; }
.zigzag { fill: none; stroke: #ffa000; stroke-width: 4; }
.band-high { fill: none; stroke: #f00000; stroke-width: 2; stroke-dasharray: 6 7; }
.band-low { fill: none; stroke: #0000c8; stroke-width: 2; stroke-dasharray: 7 8; }
.thin-dash { stroke-width: 3; stroke-dasharray: 33 12; }
.tag { font: 24px "Liberation Sans", Arial, sans-serif; }
.teal-text { fill: #10917c; }
.rose-text { fill: #e03848; }
.frame { fill: none; stroke: #fff; stroke-width: 2; }
.tick { stroke: #fff; stroke-width: 2; }
.annotation rect { fill: none; stroke: #fa5252; stroke-width: 7; }
.axis { font: 23px "Noto Sans", sans-serif; fill: #fff; white-space: pre; }
.axis.dark { fill: #000; }

.tabs { display: flex; align-items: stretch; flex: 1; min-height: 0; margin-top: 4px; background: #f0f0f0; overflow: hidden; }
.tabs a { display: flex; align-items: center; padding: 0 25px; border-top: 2px solid #111; border-right: 2px solid #999; color: #858585; font-size: 29px; line-height: 34px; text-decoration: none; white-space: nowrap; }
.tabs a:first-child { padding-left: 36px; }
.tabs .current { background: #fff; color: #000; border-top-color: #fff; border-right-color: #111; }
.tab-scroll { display: flex; flex: 1; justify-content: flex-end; align-items: center; gap: 37px; padding-right: 22px; border-top: 2px solid #111; }
.tab-scroll button { display: flex; width: 8px; height: 16px; }
.tab-scroll path { fill: #888; }
```
